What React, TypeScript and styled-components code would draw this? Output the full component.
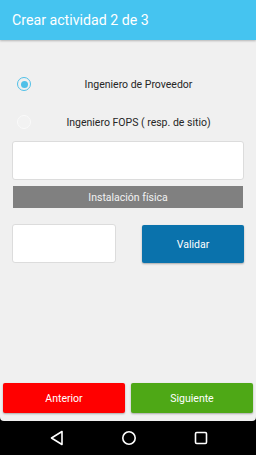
import React, { FC, ReactElement } from 'react';
import styled, { createGlobalStyle } from 'styled-components';

const GlobalStyle = createGlobalStyle`
  html, body {
    margin: 0;
    padding: 0;
    background: #000;
  }
  body {
    font-family: Roboto, "Liberation Sans", sans-serif;
  }
`;

const Screen = styled.div`
  width: 256px;
  height: 455px;
  display: flex;
  flex-direction: column;
  background: #000;
  overflow: hidden;
`;

const Panel = styled.div`
  flex: 1;
  display: flex;
  flex-direction: column;
  background: #f0f0f0;
  border-radius: 0 0 4px 4px;
  overflow: hidden;
`;

const Header = styled.div`
  height: 40px;
  flex-shrink: 0;
  background: #45c4f0;
  color: #fff;
  font-size: 14.2px;
  padding-left: 12px;
  display: flex;
  align-items: center;
  box-shadow: 0 1px 2px rgba(0, 0, 0, 0.25);
`;

const Body = styled.div`
  flex: 1;
  display: flex;
  flex-direction: column;
  padding: 0 12px;
`;

const RadioGroup = styled.div`
  display: flex;
  flex-direction: column;
  gap: 24px;
  padding-top: 37px;
  margin: 0 -12px;
`;

const RadioRow = styled.div`
  height: 14px;
  display: flex;
  align-items: center;
  padding-left: 17px;
`;

const RadioDot = styled.div<{ $checked?: boolean }>`
  width: 14px;
  height: 14px;
  box-sizing: border-box;
  border-radius: 50%;
  border: 1.5px solid ${p => (p.$checked ? '#4fc0e8' : '#fafafa')};
  background: ${p => (p.$checked ? '#f0f0f0' : '#f2f2f2')};
  display: flex;
  align-items: center;
  justify-content: center;

  &::after {
    content: '';
    display: ${p => (p.$checked ? 'block' : 'none')};
    width: 7px;
    height: 7px;
    border-radius: 50%;
    background: #4fc0e8;
  }
`;

const RadioLabel = styled.div`
  flex: 1;
  text-align: center;
  font-size: 10.5px;
  color: #262626;
  padding-right: 10px;
`;

const TextBox = styled.div<{ $width?: string }>`
  width: ${p => p.$width || '100%'};
  height: 39px;
  box-sizing: border-box;
  background: #fff;
  border: 1px solid #dcdcdc;
  border-radius: 3px;
`;

const Section = styled.div`
  margin-top: 12px;
  display: flex;
  flex-direction: column;
`;

const GrayBar = styled.div`
  margin: 6px 1px 0;
  height: 22px;
  background: #808080;
  color: #f2f2f2;
  font-size: 10.5px;
  display: flex;
  align-items: center;
  justify-content: center;
`;

const ValidateRow = styled.div`
  margin-top: 16px;
  display: flex;
  justify-content: space-between;
  align-items: flex-start;
`;

const ActionButton = styled.button<{ $bg: string; $width: string; $height: string; $offset?: string }>`
  width: ${p => p.$width};
  height: ${p => p.$height};
  margin-top: ${p => p.$offset || '0'};
  border: none;
  border-radius: 2px;
  background: ${p => p.$bg};
  color: #fff;
  font-family: Roboto, "Liberation Sans", sans-serif;
  font-size: 10.5px;
  box-shadow: 0 1px 2px rgba(0, 0, 0, 0.3);
  padding: 0;
`;

const Footer = styled.div`
  display: flex;
  justify-content: space-between;
  padding: 0 3px 8px;
  margin-top: auto;
`;

const NavBar = styled.div`
  height: 34px;
  flex-shrink: 0;
  display: flex;
  align-items: center;
  justify-content: center;
  gap: 52px;
  padding-left: 2px;
`;

const NavIcon: FC<{ kind: 'back' | 'home' | 'recent' }> = ({ kind }): ReactElement => (
  <svg width="20" height="20" viewBox="0 0 20 20" fill="none" stroke="#fff" strokeWidth="1.6">
    {kind === 'back' && <path d="M15 3.5 L15 16.5 L4.5 10 Z" strokeLinejoin="round" />}
    {kind === 'home' && <circle cx="10" cy="10" r="6.2" />}
    {kind === 'recent' && <rect x="4.5" y="4.5" width="11" height="11" rx="1.2" />}
  </svg>
);

const App: FC = (): ReactElement => {
  return (
    <>
      <GlobalStyle />
      <Screen>
        <Panel>
          <Header>Crear actividad 2 de 3</Header>
          <Body>
            <RadioGroup>
              <RadioRow>
                <RadioDot $checked />
                <RadioLabel>Ingeniero de Proveedor</RadioLabel>
              </RadioRow>
              <RadioRow>
                <RadioDot />
                <RadioLabel>Ingeniero FOPS ( resp. de sitio)</RadioLabel>
              </RadioRow>
            </RadioGroup>
            <Section>
              <TextBox />
              <GrayBar>Instalación física</GrayBar>
            </Section>
            <ValidateRow>
              <TextBox $width="104px" />
              <ActionButton $bg="#0a72ac" $width="102px" $height="38px" $offset="1px">Validar</ActionButton>
            </ValidateRow>
          </Body>
          <Footer>
            <ActionButton $bg="#ff0000" $width="122px" $height="30px">Anterior</ActionButton>
            <ActionButton $bg="#4ea816" $width="122px" $height="30px">Siguiente</ActionButton>
          </Footer>
        </Panel>
        <NavBar>
          <NavIcon kind="back" />
          <NavIcon kind="home" />
          <NavIcon kind="recent" />
        </NavBar>
      </Screen>
    </>
  );
};

export default App;
